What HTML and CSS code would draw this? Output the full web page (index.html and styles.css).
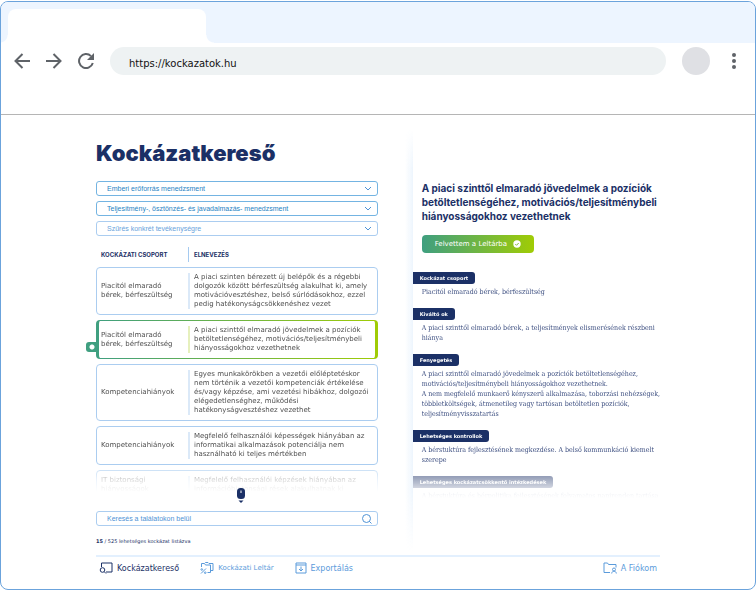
FILE: index.html
```
<!DOCTYPE html>
<html lang="hu">
<head>
<meta charset="utf-8">
<title>Kockázatkereső</title>
<link rel="stylesheet" href="styles.css">
</head>
<body>
<div class="window">
  <div class="tabs"><div class="tab"></div></div>
  <div class="toolbar">
    <button class="tool" aria-label="Vissza"><svg viewBox="0 0 16 16"><path d="M16 8H1.5M8.500 1L1.500 8l7 7" /></svg></button>
    <button class="tool" aria-label="Előre"><svg viewBox="0 0 16 16"><path d="M0 8h14.500M7.500 1l7 7-7 7" /></svg></button>
    <button class="tool" aria-label="Frissítés"><svg viewBox="0 0 16 16"><path d="M14.800 10A7 7 0 1 1 13 3.100" /><path class="solid" d="M16 0v7H9z" /></svg></button>
    <input class="address" type="text" aria-label="Cím" value="https://kockazatok.hu">
    <span class="avatar"></span>
    <button class="tool" aria-label="Menü"><svg viewBox="0 0 16 16"><circle class="solid" cx="8" cy="2" r="2"/><circle class="solid" cx="8" cy="8" r="2"/><circle class="solid" cx="8" cy="14" r="2"/></svg></button>
  </div>

  <main class="page">
    <section class="finder">
      <h1>Kockázatkereső</h1>
      <div class="filters">
        <div class="field"><select aria-label="Terület"><option>Emberi erőforrás menedzsment</option></select><svg class="chevron" viewBox="0 0 8 5"><path d="M1 1l3 3 3-3"/></svg></div>
        <div class="field"><select aria-label="Folyamat"><option>Teljesítmény-, ösztönzés- és javadalmazás- menedzsment</option></select><svg class="chevron" viewBox="0 0 8 5"><path d="M1 1l3 3 3-3"/></svg></div>
        <div class="field empty"><select aria-label="Tevékenység"><option>Szűrés konkrét tevékenységre</option></select><svg class="chevron" viewBox="0 0 8 5"><path d="M1 1l3 3 3-3"/></svg></div>
      </div>
      <div class="results">
        <table>
          <thead><tr><th>KOCKÁZATI CSOPORT</th><th>ELNEVEZÉS</th></tr></thead>
          <tbody>
            <tr><td>Piacitól elmaradó<br>bérek, bérfeszültség</td><td>A piaci szinten bérezett új belépők és a régebbi<br>dolgozók között bérfeszültség alakulhat ki, amely<br>motivációvesztéshez, belső súrlódásokhoz, ezzel<br>pedig hatékonyságcsökkenéshez vezet</td></tr>
            <tr class="active"><td>Piacitól elmaradó<br>bérek, bérfeszültség<span class="mark"></span></td><td>A piaci szinttől elmaradó jövedelmek a pozíciók<br>betöltetlenségéhez, motivációs/teljesítménybeli<br>hiányosságokhoz vezethetnek</td></tr>
            <tr><td>Kompetenciahiányok</td><td>Egyes munkakörökben a vezetői előléptetéskor<br>nem történik a vezetői kompetenciák értékelése<br>és/vagy képzése, ami vezetési hibákhoz, dolgozói<br>elégedetlenséghez, működési<br>hatékonyságvesztéshez vezethet</td></tr>
            <tr><td>Kompetenciahiányok</td><td>Megfelelő felhasználói képességek hiányában az<br>informatikai alkalmazások potenciálja nem<br>használható ki teljes mértékben</td></tr>
            <tr><td>IT biztonsági<br>hiányosságok</td><td>Megfelelő felhasználói képzések hiányában az<br>információbiztonsági rések alakulhatnak ki</td></tr>
          </tbody>
        </table>
        <svg class="mouse" viewBox="0 0 8 16"><rect width="8" height="11" rx="3.500" fill="#1b3066"/><path d="M4 2.500v2.500" stroke="#fff"/><path d="M1.500 12.500h5L4 15z" fill="#1b3066"/></svg>
      </div>
      <div class="field search"><input type="search" aria-label="Keresés" placeholder="Keresés a találatokon belül"><svg class="lens" viewBox="0 0 10 10"><circle cx="4.500" cy="4.500" r="4"/><path d="M7.300 7.300L9.500 9.500"/></svg></div>
      <p class="count"><b>15</b> / 525 lehetséges kockázat listázva</p>
    </section>

    <section class="detail">
      <h2>A piaci szinttől elmaradó jövedelmek a pozíciók betöltetlenségéhez, motivációs/teljesítménybeli hiányosságokhoz vezethetnek</h2>
      <button class="added">Felvettem a Leltárba<svg viewBox="0 0 8 8"><circle cx="4" cy="4" r="3.700" fill="#fff"/><path d="M2.300 4.100l1.200 1.200 2.200-2.300" fill="none" stroke="#7fbb33"/></svg></button>
      <div class="facts">
        <h3>Kockázat csoport</h3>
        <p>Piacitól elmaradó bérek, bérfeszültség</p>
        <h3>Kiváltó ok</h3>
        <p>A piaci szinttől elmaradó bérek, a teljesítmények elismerésének részbeni<br>hiánya</p>
        <h3>Fenyegetés</h3>
        <p>A piaci szinttől elmaradó jövedelmek a pozíciók betöltetlenségéhez,<br>motivációs/teljesítménybeli hiányosságokhoz vezethetnek.<br>A nem megfelelő munkaerő kényszerű alkalmazása, toborzási nehézségek,<br>többletköltségek, átmenetileg vagy tartósan betöltetlen pozíciók,<br>teljesítményvisszatartás</p>
        <h3>Lehetséges kontrollok</h3>
        <p>A bérstuktúra fejlesztésének megkezdése. A belső kommunkáció kiemelt<br>szerepe</p>
        <h3>Lehetséges kockázatcsökkentő intézkedések</h3>
        <p>A bérstuktúra és bérpolitika fejlesztésének folyamatos napirenden tartása</p>
      </div>
    </section>
  </main>

  <nav class="nav">
    <a class="current" href="#kereso"><svg viewBox="0 0 14 12"><path d="M2.500 5V1h10.500v9H7"/><circle cx="3.500" cy="8" r="2.300"/><path d="M5.200 9.700L7 11.500"/></svg>Kockázatkereső</a>
    <a class="small" href="#leltar"><svg viewBox="0 0 14 12"><path d="M1.500 5V1.500h3l1 1.500h5v7.500H7.500M5.500 1V.5h2.500l1 1h4v7h-2"/><path d="M1 11.500l5-5"/><circle cx="1.800" cy="7.500" r=".8"/><circle cx="5.200" cy="10.700" r=".8"/></svg>Kockázati Leltár</a>
    <a href="#export"><svg class="square" viewBox="0 0 12 12"><path d="M1 1h10v10H1zM1 3h10M6 4.500v4.500M4 7l2 2 2-2"/></svg>Exportálás</a>
    <a class="account" href="#fiok"><svg viewBox="0 0 14 12"><path d="M7 10.500H1V1h3.500l1 1.500H13v3"/><circle cx="11" cy="7.500" r="1.500"/><path d="M8.700 11.500c0-3 4.600-3 4.600 0"/></svg>A Fiókom</a>
  </nav>
</div>
</body>
</html>
```
FILE: styles.css
```
* { box-sizing: border-box; }

body {
  margin: 0;
  padding-top: 1px;
  background: #fff;
  color: #1b3066;
  font: 7px/9px "DejaVu Sans", sans-serif;
}

h1, h2, h3, p { margin: 0; }
button, input, select { font: inherit; color: inherit; margin: 0; }
svg { display: block; flex: none; }

.window {
  display: flex;
  flex-direction: column;
  min-height: calc(100vh - 1px);
  border: 1px solid #6ba3dc;
  border-radius: 8px;
  overflow: hidden;
}

/* Browser frame */
.tabs { height: 41px; padding: 7px 7px 0; background: #edf5ff; }
.tab {
  position: relative;
  width: 198px;
  height: 34px;
  border-radius: 8px 8px 0 0;
  background: #fff;
}
.tab::before, .tab::after {
  content: "";
  position: absolute;
  bottom: 0;
  width: 8px;
  height: 8px;
}
.tab::before { right: 100%; background: radial-gradient(circle at 0 0, transparent 7px, #fff 8px); }
.tab::after { left: 100%; background: radial-gradient(circle at 100% 0, transparent 7px, #fff 8px); }

.toolbar {
  display: flex;
  align-items: center;
  gap: 16px;
  padding: 4px 13px 39px;
  border-bottom: 1px solid #b5b5b5;
}
.tool { width: 16px; height: 16px; padding: 0; border: 0; background: none; }
.tool svg { width: 16px; height: 16px; fill: none; stroke: #5f6368; stroke-width: 2; }
.tool .solid { fill: #5f6368; stroke: none; }
.address {
  flex: 1;
  min-width: 0;
  height: 28px;
  padding: 4px 19px 0;
  border: 0;
  border-radius: 14px;
  background: #eef2f3;
  color: #111;
  font-size: 10px;
}
.avatar { width: 28px; height: 28px; border-radius: 50%; background: #dfe0e4; }

/* Content */
.page {
  display: grid;
  grid-template-columns: 282fr 247fr;
  gap: 35px;
  flex: 1;
  padding: 0 95px;
}
.finder { padding-top: 23px; }
h1 { font: 900 22px/30px Inter, sans-serif; margin-bottom: 13px; }

.filters { display: grid; gap: 5px; margin-bottom: 11px; }
.field { position: relative; color: #1f83c4; font: 7px/9px "Liberation Sans", sans-serif; }
.field select, .field input {
  display: block;
  width: 100%;
  height: 15px;
  padding: 0 10px;
  border: 1px solid #74b4e2;
  border-radius: 3px;
  background: #fff;
  appearance: none;
}
.field.empty { color: #69a3dc; }
.field.empty select, .search input { border-color: #abcdf0; }
.search, .search input::placeholder { color: #4f93d6; opacity: 1; }
.chevron { position: absolute; right: 6px; top: 5px; width: 8px; height: 5px; }
.lens { position: absolute; right: 6px; top: 3px; width: 10px; height: 10px; }
.chevron, .lens { fill: none; stroke: #4f93d6; pointer-events: none; }

.results { position: relative; margin-bottom: 19px; }
table { display: block; }
thead { display: block; margin-bottom: 5px; }
tr { display: grid; grid-template-columns: 87px 1fr; align-items: center; padding: 5px 4px; }
thead tr { padding: 0 5px; }
th, td { padding: 0; text-align: left; }
th { font: 700 6px/15px Inter, sans-serif; }
td { color: #4f4f4f; }
th + th { padding-left: 5px; border-left: 1px solid #a5caf0; }
td + td { padding-left: 4px; border-left: 2px solid #dbe9f8; }

tbody {
  display: grid;
  gap: 5px;
  max-height: 225px;
  margin-left: -10px;
  padding-left: 10px;
  overflow: hidden;
  -webkit-mask-image: linear-gradient(#000 198px, rgb(0 0 0 / .6) 203px, rgb(0 0 0 / .2) 214px, transparent 225px);
  mask-image: linear-gradient(#000 198px, rgb(0 0 0 / .6) 203px, rgb(0 0 0 / .2) 214px, transparent 225px);
}
tbody tr { border: 1px solid #abcdf0; border-radius: 4px; }
tbody .active {
  position: relative;
  padding: 5px 2px;
  border-width: 1px 3px;
  border-color: transparent;
  background: linear-gradient(#fff, #fff) padding-box, linear-gradient(90deg, #3f9f80, #a0cc05) border-box;
}
.active td + td { border-color: #e6f0bd; }
.mark {
  position: absolute;
  left: -13px;
  bottom: 6px;
  width: 12px;
  height: 10px;
  border-radius: 3px 0 0 3px;
  background: radial-gradient(circle at 6px 5px, #fff 2px, transparent 3px) #3f9f80;
}
.mouse { position: absolute; left: 50%; bottom: -12px; width: 8px; height: 16px; }
.count { margin-top: 11px; font-size: 5px; }

/* Selected risk */
.detail { position: relative; padding-top: 66px; }
.detail::before {
  content: "";
  position: absolute;
  top: 14px;
  bottom: 3px;
  right: 100%;
  width: 8px;
  background: linear-gradient(90deg, transparent, #edf5fd);
  -webkit-mask-image: linear-gradient(transparent, #000 40px, #000 360px, transparent);
  mask-image: linear-gradient(transparent, #000 40px, #000 360px, transparent);
}
h2 { margin-left: 9px; font: 700 10px/14px Inter, sans-serif; }
.added {
  display: flex;
  align-items: center;
  gap: 6px;
  height: 18px;
  margin: 12px 0 19px 9px;
  padding: 0 13px;
  border: 0;
  border-radius: 4px;
  background: linear-gradient(90deg, #3f9f80, #a0cc05);
  color: #fff;
}
.added svg { width: 8px; height: 8px; }
.facts {
  -webkit-mask-image: linear-gradient(#000 200px, rgb(0 0 0 / .5) 203px, rgb(0 0 0 / .2) 216px, transparent 226px);
  mask-image: linear-gradient(#000 200px, rgb(0 0 0 / .5) 203px, rgb(0 0 0 / .2) 216px, transparent 226px);
}
h3 {
  width: fit-content;
  padding: 0 7px;
  border-radius: 0 3px 3px 0;
  background: #1b3066;
  color: #fff;
  font: 700 5px/12px "DejaVu Sans", sans-serif;
}
.facts p {
  margin: 3px 0 11px 9px;
  color: #3d4f80;
  font: 7px/10px "DejaVu Serif Condensed", "DejaVu Serif", serif;
  white-space: nowrap;
}

/* Bottom navigation */
.nav {
  display: flex;
  align-items: center;
  gap: 21px;
  margin: 0 95px;
  padding: 5px 3px 15px;
  border-top: 2px solid #e3f0fe;
  font-size: 8px;
}
.nav a { display: flex; align-items: center; gap: 4px; color: #5b9bdb; text-decoration: none; }
.nav .current { color: #1b3066; }
.nav .small { font-size: 7px; }
.nav .account { margin-left: auto; }
.nav svg { width: 14px; height: 12px; fill: none; stroke: currentColor; }
.nav .square { width: 12px; }
```
